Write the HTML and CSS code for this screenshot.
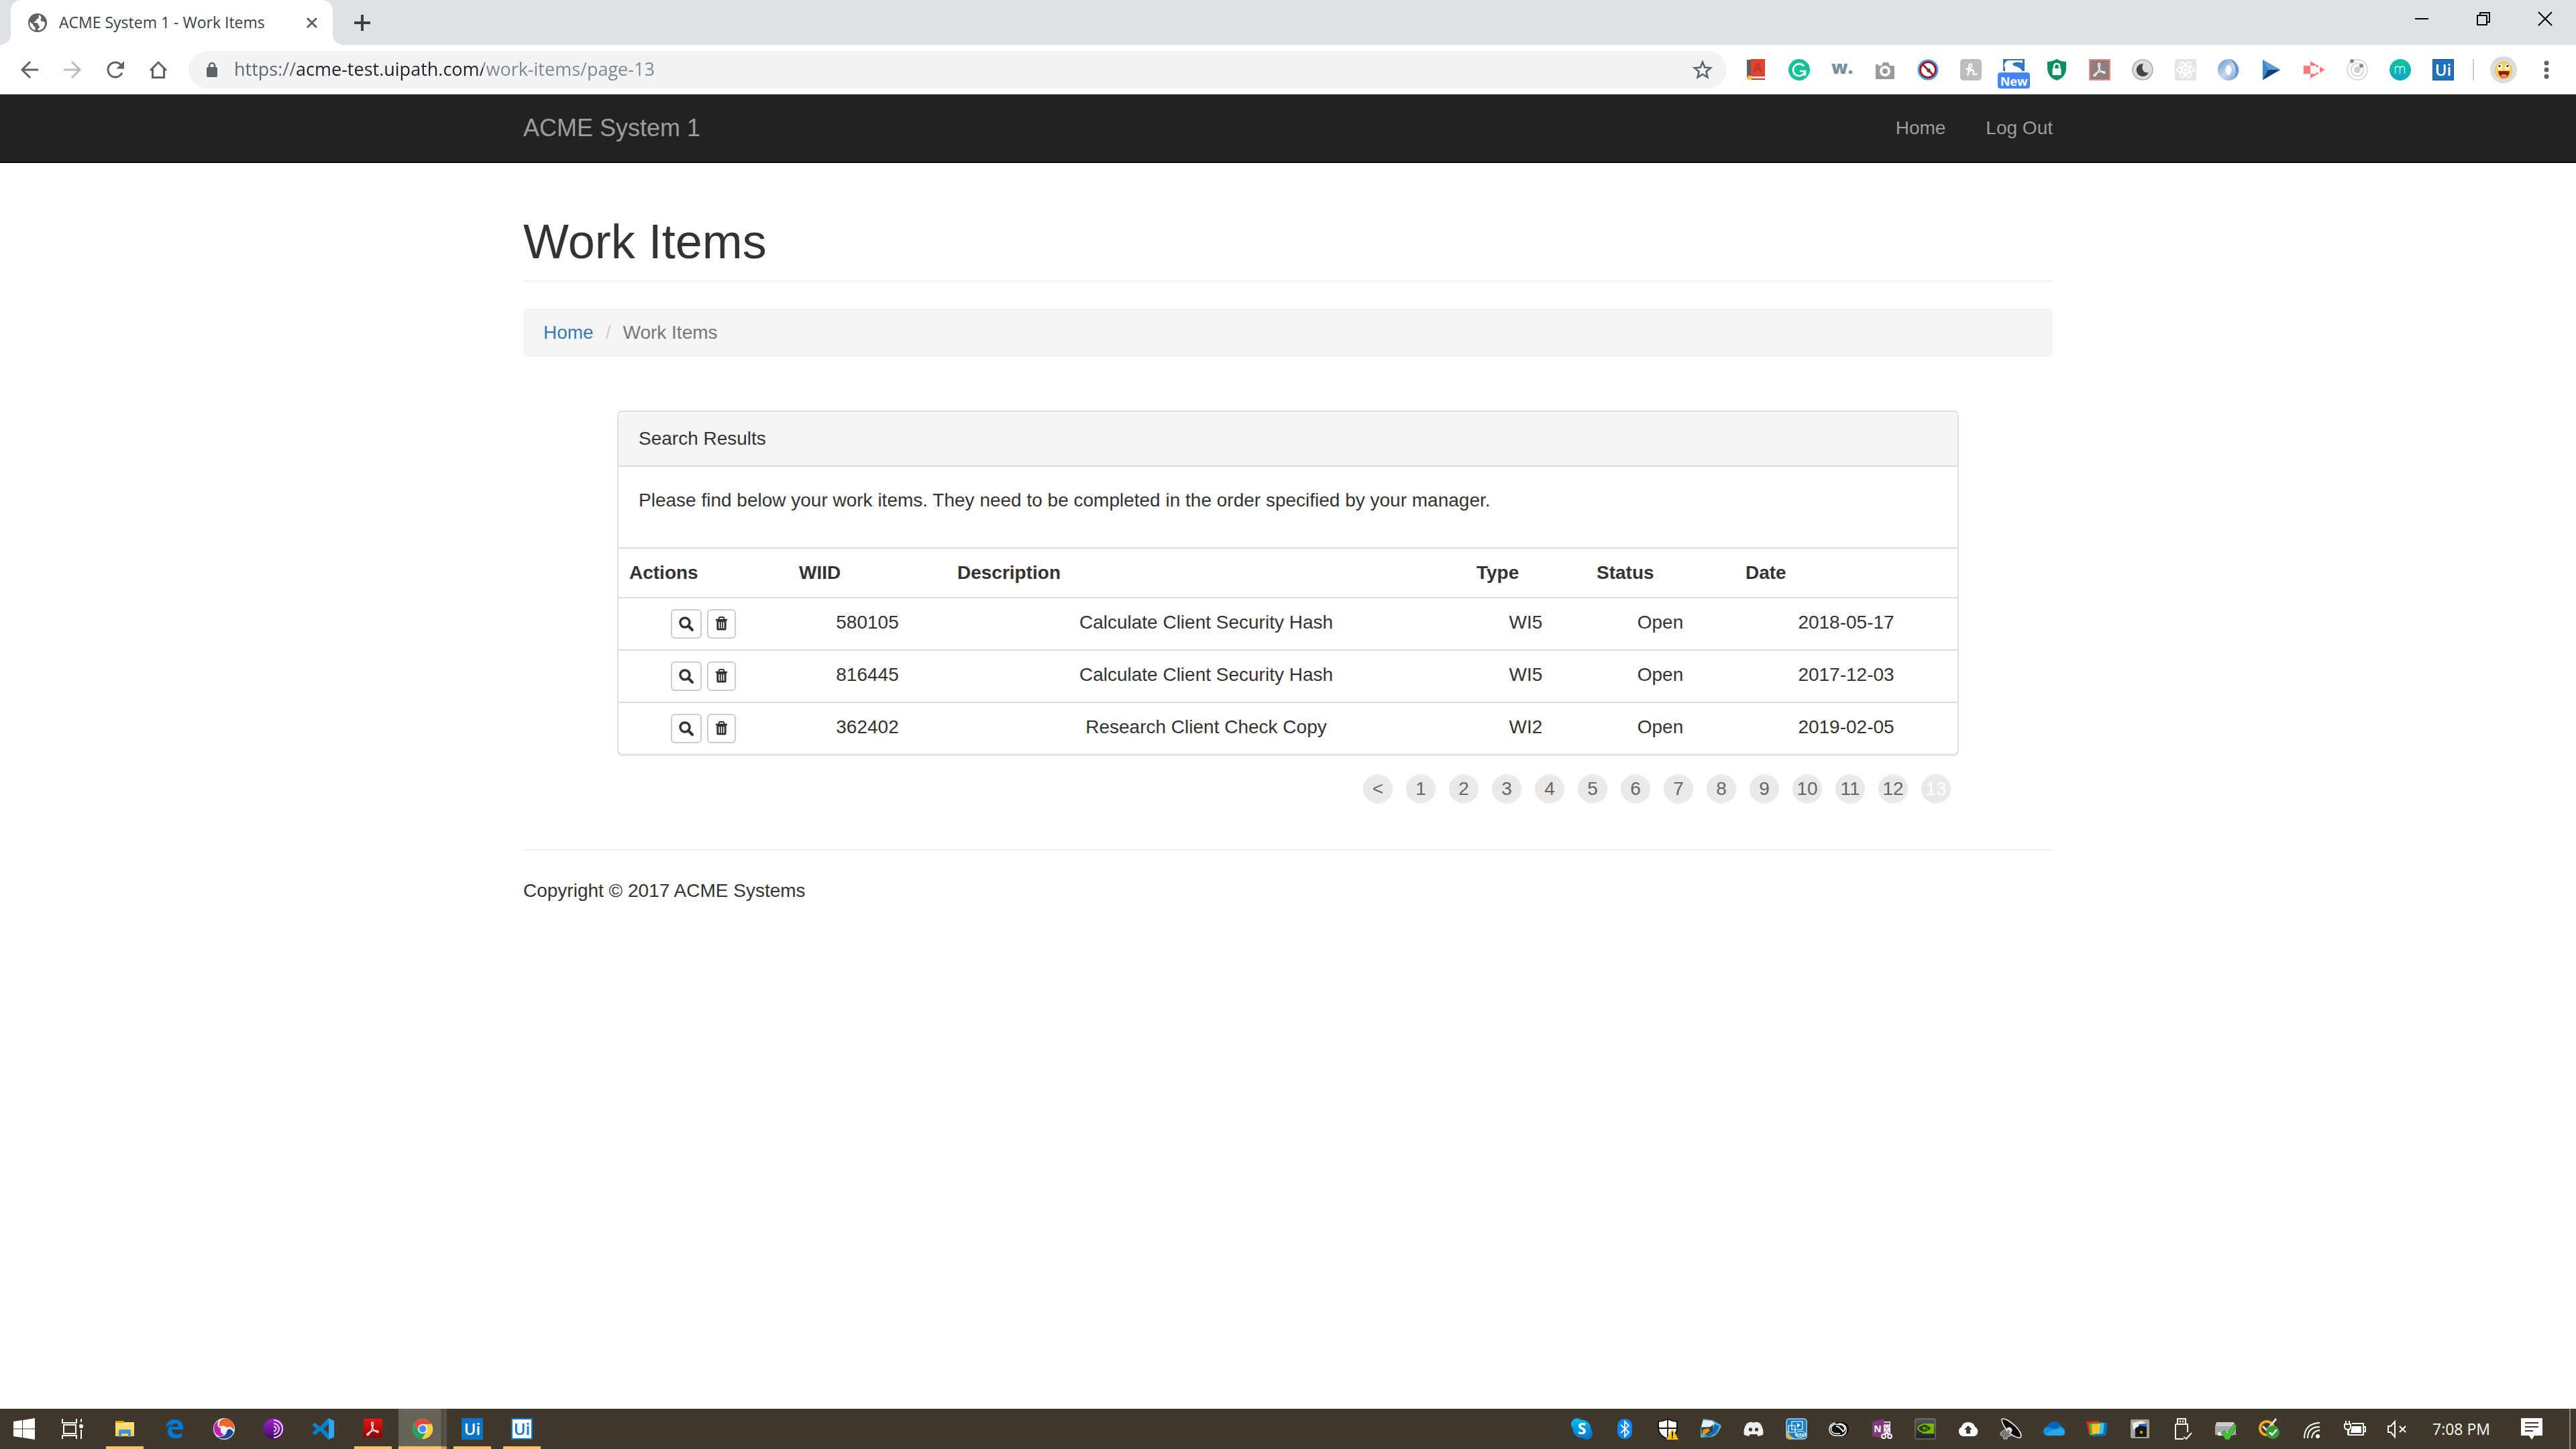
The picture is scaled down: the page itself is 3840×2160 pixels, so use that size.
FILE: index.html
```html
<!DOCTYPE html>
<html lang="en">
<head>
<meta charset="utf-8">
<title>ACME System 1 - Work Items</title>
<link rel="stylesheet" href="styles.css">
</head>
<body>
<svg class="defs" aria-hidden="true">
  <defs>
    <symbol id="search" viewBox="0 0 22 24"><circle cx="9" cy="10" r="7" fill="none" stroke="currentColor" stroke-width="3.4"/><path d="M14 15l6 6" stroke="currentColor" stroke-width="4" stroke-linecap="round"/></symbol>
    <symbol id="trash" viewBox="0 0 20 24"><path d="M6 5V3.500q0-2 2-2h4q2 0 2 2V5" fill="none" stroke="currentColor" stroke-width="2"/><path d="M1 4.500h18v2.500H1zM2.500 7h15v13q0 2-2 2h-11q-2 0-2-2z" fill="currentColor"/><path d="M6.500 9v10M10 9v10M13.500 9v10" stroke="#fff" stroke-width="1.600"/></symbol>
    <linearGradient id="skypeFill" x2="0" y2="1"><stop stop-color="#00b7f0"/><stop offset="1" stop-color="#0078d4"/></linearGradient>
    <linearGradient id="torFill" x2="0" y2="1"><stop stop-color="#a020d8"/><stop offset="1" stop-color="#420c5d"/></linearGradient>
    <linearGradient id="mFill" x2="0" y2="1"><stop stop-color="#13c39c"/><stop offset="1" stop-color="#0aa6c9"/></linearGradient>
    <linearGradient id="ringFill" x2="1" y2="1"><stop stop-color="#5d8fc7"/><stop offset=".5" stop-color="#c5d8ec"/><stop offset="1" stop-color="#6f9cd0"/></linearGradient>
    <linearGradient id="steel" x2="0" y2="1"><stop stop-color="#50555a"/><stop offset="1" stop-color="#1f2428"/></linearGradient>
    <linearGradient id="pdfRed" x2="0" y2="1"><stop stop-color="#f01414"/><stop offset="1" stop-color="#8b0000"/></linearGradient>
    <linearGradient id="folder" x2="0" y2="1"><stop stop-color="#ffe07a"/><stop offset="1" stop-color="#ffcf48"/></linearGradient>
    <symbol id="adobe" viewBox="0 0 32 32"><path d="M15 6c2.500 0 1.500 6-1 11-1.500 3.500-4 8.500-6 8.500-2.500 0 0-4 6-6 4-1.300 10-1.600 10 .8 0 2.200-5-.3-7.500-3.800C14 13 13 6 15 6z" fill="none" stroke="#fff" stroke-width="1.500"/></symbol>
  </defs>
</svg>

<header class="browser">
  <div class="tabstrip">
    <div class="tab">
      <svg class="favicon" viewBox="0 0 28 28"><circle cx="14" cy="14" r="14" fill="#5f6368"/><path d="M16 2.500c-1 3 1 4-2 5.500-3 1-1 3-4 4-2 .5-2 2 0 2 3 0 5 0 5 3 0 2 2 1 2 3 0 2-3 2-3 5 6 1 11-4 11-11 0-1-1-2-3-2-3 0-4-1-3-4 1-2 0-5-3-5.500zM2.500 12c2 3 5 3 5 6 1 2 4 2 3 4v3C5 24 1 18 2.500 12z" fill="#fff"/></svg>
      <span class="tab-title">ACME System 1 - Work Items</span>
      <button class="plain tab-close" aria-label="Close tab"><svg width="18" height="18" viewBox="0 0 18 18"><path d="M2 2l14 14M16 2L2 16" stroke="#5f6368" stroke-width="3"/></svg></button>
    </div>
    <button class="plain new-tab" aria-label="New tab"><svg width="24" height="24" viewBox="0 0 24 24"><path d="M12 0v24M0 12h24" stroke="#3c4043" stroke-width="4"/></svg></button>
    <div class="window-buttons">
      <button class="plain" aria-label="Minimize"><svg width="20" height="20" viewBox="0 0 20 20"><path d="M0 10h20" stroke="#000" stroke-width="2"/></svg></button>
      <button class="plain" aria-label="Restore"><svg width="20" height="20" viewBox="0 0 20 20" fill="none" stroke="#000" stroke-width="2"><path d="M1 5h14v14H1zM5 5V1h14v14h-4"/></svg></button>
      <button class="plain" aria-label="Close"><svg width="20" height="20" viewBox="0 0 20 20"><path d="M0 0l20 20M20 0L0 20" stroke="#000" stroke-width="2"/></svg></button>
    </div>
  </div>

  <div class="toolbar">
    <div class="nav-buttons">
      <button class="plain" aria-label="Back"><svg viewBox="0 0 32 32" fill="none" stroke="#5f6368" stroke-width="3"><path d="M29 16H5M17 4L5 16l12 12"/></svg></button>
      <button class="plain" aria-label="Forward"><svg viewBox="0 0 32 32" fill="none" stroke="#babcbe" stroke-width="3"><path d="M3 16h24M15 4l12 12-12 12"/></svg></button>
      <button class="plain" aria-label="Reload"><svg viewBox="0 0 32 32"><path d="M26 20.500A11 11 0 1 1 24.500 9" fill="none" stroke="#5f6368" stroke-width="3"/><path d="M29 3v11.500H17.500z" fill="#5f6368"/></svg></button>
      <button class="plain" aria-label="Home page"><svg viewBox="0 0 32 32"><path d="M7.500 14v13.500h17V14M4 17L16 5l12 12" fill="none" stroke="#5f6368" stroke-width="3"/></svg></button>
    </div>
    <div class="omnibox">
      <svg class="lock" viewBox="0 0 18 24"><rect x="1" y="8" width="16" height="15" rx="2" fill="#5f6368"/><path d="M5 9V6a4 4 0 0 1 8 0v3" fill="none" stroke="#5f6368" stroke-width="2.500"/></svg>
      <input class="url" type="text" aria-label="Address" value="https://acme-test.uipath.com/work-items/page-13">
      <button class="plain star" aria-label="Bookmark this page"><svg width="32" height="32" viewBox="0 0 32 32"><path d="M16 4.500l3.300 8 8.700.7-6.600 5.600 2 8.400-7.400-4.500-7.400 4.500 2-8.400L4 13.200l8.700-.7z" fill="none" stroke="#5f6368" stroke-width="2.600"/></svg></button>
    </div>
    <div class="extensions">
      <svg viewBox="0 0 32 32"><path d="M2 1h6v27H2z" fill="#616161"/><path d="M8 0h21v26H8z" fill="#e04334"/><text x="18" y="20" class="g" font-size="20" font-weight="700" fill="#b93a30" text-anchor="middle">A</text><path d="M4 27h25v2H6z" fill="#ddd"/><path d="M7 29h22v2H7z" fill="#d63b30"/><path d="M3 25h6v7l-3-2-3 2z" fill="#fbc02d"/></svg>
      <svg viewBox="0 0 32 32"><circle cx="16" cy="16" r="16" fill="#15c39a"/><path d="M23 10.500A9 9 0 1 0 24.500 19M17 18h8v7" fill="none" stroke="#fff" stroke-width="2.600"/></svg>
      <svg viewBox="0 0 32 32"><text x="0" y="22" class="g" font-size="27" font-weight="800" fill="#78909c">w.</text></svg>
      <svg viewBox="0 0 32 32"><path d="M2 11V8h4v2h5l2-5h8l2 5h7v20H2z" fill="#9a9a9a"/><circle cx="16" cy="18" r="8" fill="#fff"/><circle cx="16" cy="18" r="4" fill="#999"/></svg>
      <svg viewBox="0 0 32 32"><circle cx="16" cy="16" r="15.500" fill="#4c9ff0"/><circle cx="16" cy="16" r="11.500" fill="#fff" stroke="#9c2020" stroke-width="3"/><circle cx="17" cy="17" r="3" fill="#48607c"/><path d="M8 8l16 16" stroke="#a32020" stroke-width="3"/></svg>
      <svg viewBox="0 0 32 32"><rect width="32" height="32" rx="5" fill="#bdbdbd"/><path d="M9 14q3 3 7-1 3-4 0-5.500-3-.5-3 5.500 0 7-2 11.500 2-8 6-8.500 4 0 2.500 4-1 5 5 2" fill="none" stroke="#fff" stroke-width="2.300" stroke-linecap="round"/></svg>
      <span class="ext-badged">
        <svg viewBox="0 0 32 32"><path d="M0 0h32v18H0z" fill="#337ab7"/><path d="M9 2h20v4q-8-3-14 0-3 3 4 5 8 2 9 7H3v-5q-3-4 0-7 2-4 6-4z" fill="#fff"/></svg>
        <span class="ext-label">New</span>
      </span>
      <svg viewBox="0 0 32 32"><path d="M16 0q7 4 14 4v9q0 14-14 19Q2 27 2 13V4q7 0 14-4z" fill="#0a8f5f"/><path d="M9.500 14h13v10h-13z" fill="#fff"/><path d="M12 14v-3q0-4 4-4t4 4v3" fill="none" stroke="#fff" stroke-width="2.500"/></svg>
      <svg viewBox="0 0 32 32"><rect x="1" y="1" width="30" height="30" fill="#8c7f7e" stroke="#f4857b" stroke-width="2"/><use href="#adobe"/></svg>
      <svg viewBox="0 0 32 32"><circle cx="16" cy="16" r="15" fill="#dcdcdc" stroke="#aaa" stroke-width="1.500"/><path d="M17 7a9.500 9.500 0 1 0 8 13c-8 2-12-6-8-13z" fill="#444"/></svg>
      <svg viewBox="0 0 32 32"><rect width="32" height="32" rx="2" fill="#e5e5e5"/><g fill="none" stroke="#fff" stroke-width="1.800"><ellipse cx="16" cy="16" rx="13" ry="5"/><ellipse cx="16" cy="16" rx="13" ry="5" transform="rotate(60 16 16)"/><ellipse cx="16" cy="16" rx="13" ry="5" transform="rotate(120 16 16)"/></g><circle cx="16" cy="16" r="2.500" fill="#fff"/></svg>
      <svg viewBox="0 0 32 32"><circle cx="16" cy="16" r="16" fill="url(#ringFill)"/><path d="M18 0c12 4 17 20 5 30C31 20 28 8 18 0z" fill="#5482ba"/><path d="M16 8q9 8 0 17-9-9 0-17z" fill="#fff"/></svg>
      <svg viewBox="0 0 32 32"><path d="M3 1l26 15L3 31z" fill="#2e6fb5"/><path d="M3 1l8 15H29z" fill="#5b9bd8"/><path d="M3 31l8-15h18z" fill="#153f77"/><path d="M3 1l8 15-8 15z" fill="#3c86ca"/></svg>
      <svg viewBox="0 0 32 32"><path d="M0 10h10V3l22 13-22 13v-7H0z" fill="#ff7b7b"/><path d="M10 10h9v3l5-3v12l-5-3v3h-9z" fill="#fff"/></svg>
      <svg viewBox="0 0 32 32"><circle cx="16" cy="16" r="15" fill="none" stroke="#d8d8d8" stroke-width="2"/><circle cx="16" cy="16" r="9.500" fill="none" stroke="#d8d8d8" stroke-width="2"/><circle cx="16" cy="16" r="5" fill="#d0d0d0"/><circle cx="8" cy="3" r="3" fill="#888"/><circle cx="22" cy="10" r="3" fill="#888"/></svg>
      <svg viewBox="0 0 32 32"><circle cx="16" cy="16" r="16" fill="url(#mFill)"/><path d="M8.500 22V11M8.500 14c1-4 7-4 7 0v8M15.500 14c1-4 7-4 7 0v8" fill="none" stroke="#c7f0ec" stroke-width="1.300"/></svg>
      <svg viewBox="0 0 32 32"><rect x=".5" y=".5" width="31" height="31" fill="#1f72b8" stroke="#2b4fa3"/><text x="16" y="25" class="g" font-size="24" fill="#fff" text-anchor="middle" font-weight="600">Ui</text></svg>
    </div>
    <div class="profile">
      <svg class="avatar" viewBox="0 0 40 40"><circle cx="20" cy="20" r="20" fill="#dcdcdc"/><circle cx="20" cy="21" r="12.500" fill="#fcd558" stroke="#e9b53c"/><ellipse cx="14.500" cy="16" rx="3.500" ry="4" fill="#fff"/><ellipse cx="25.500" cy="16" rx="3.500" ry="4" fill="#fff"/><circle cx="14" cy="14.500" r="1.500"/><circle cx="26" cy="14.500" r="1.500"/><path d="M12 22h17q-1 10-8.500 10T12 22z" fill="#8f1b12"/><path d="M15 29q6-5 11 0-5 5-11 0z" fill="#f08a8a"/></svg>
      <button class="plain menu" aria-label="Menu"><svg width="8" height="28" viewBox="0 0 8 28" fill="#5f6368"><circle cx="4" cy="4" r="3.500"/><circle cx="4" cy="14" r="3.500"/><circle cx="4" cy="24" r="3.500"/></svg></button>
    </div>
  </div>
</header>

<div class="page">
  <nav class="navbar">
    <div class="container navbar-inner">
      <a class="brand" href="#">ACME System 1</a>
      <div class="nav-links"><a href="#">Home</a><a href="#">Log Out</a></div>
    </div>
  </nav>

  <main class="container">
    <h1>Work Items</h1>
    <ol class="breadcrumb"><li><a href="#">Home</a></li><li>Work Items</li></ol>

    <div class="results">
      <section class="panel">
        <h2 class="panel-heading">Search Results</h2>
        <p class="panel-body">Please find below your work items. They need to be completed in the order specified by your manager.</p>
        <table class="items">
          <colgroup><col class="c-actions"><col class="c-wiid"><col><col class="c-type"><col class="c-status"><col class="c-date"></colgroup>
          <thead><tr><th>Actions</th><th>WIID</th><th>Description</th><th>Type</th><th>Status</th><th>Date</th></tr></thead>
          <tbody>
            <tr><td><div class="actions"><button class="btn" aria-label="View 580105"><svg class="i-search"><use href="#search"/></svg></button><button class="btn" aria-label="Delete 580105"><svg class="i-trash"><use href="#trash"/></svg></button></div></td><td>580105</td><td>Calculate Client Security Hash</td><td>WI5</td><td>Open</td><td>2018-05-17</td></tr>
            <tr><td><div class="actions"><button class="btn" aria-label="View 816445"><svg class="i-search"><use href="#search"/></svg></button><button class="btn" aria-label="Delete 816445"><svg class="i-trash"><use href="#trash"/></svg></button></div></td><td>816445</td><td>Calculate Client Security Hash</td><td>WI5</td><td>Open</td><td>2017-12-03</td></tr>
            <tr><td><div class="actions"><button class="btn" aria-label="View 362402"><svg class="i-search"><use href="#search"/></svg></button><button class="btn" aria-label="Delete 362402"><svg class="i-trash"><use href="#trash"/></svg></button></div></td><td>362402</td><td>Research Client Check Copy</td><td>WI2</td><td>Open</td><td>2019-02-05</td></tr>
          </tbody>
        </table>
      </section>
      <nav class="pager" aria-label="Pages"><a href="#">&lt;</a><a href="#">1</a><a href="#">2</a><a href="#">3</a><a href="#">4</a><a href="#">5</a><a href="#">6</a><a href="#">7</a><a href="#">8</a><a href="#">9</a><a href="#">10</a><a href="#">11</a><a href="#">12</a><a href="#" class="current" aria-current="page">13</a></nav>
    </div>

    <footer class="footer">Copyright © 2017 ACME Systems</footer>
  </main>
</div>

<div class="taskbar">
  <div class="apps">
    <button class="plain app" aria-label="Start"><svg viewBox="0 0 32 32" fill="#fff"><path d="M0 5l13-2v12.500H0zM14 3l18-3v15.500H14zM0 16.500h13V29L0 27zM14 16.500h18V32l-18-3z"/></svg></button>
    <button class="plain app task-view" aria-label="Task View"><svg viewBox="0 0 32 32" fill="none" stroke="#fff" stroke-width="2"><path d="M1 1v6h21V1M3 10h18v13H3zM1 31v-5h21v5M29 1v5M29 17v14"/><circle cx="29" cy="12" r="2" fill="#fff"/></svg></button>
    <button class="plain app open" aria-label="File Explorer"><svg viewBox="0 0 32 32"><path d="M2 4h12l2 3h-2v3H2z" fill="#e0a000"/><path d="M2 7h12l2-1h14v21H2z" fill="url(#folder)"/><path d="M7 28V19q0-2 2-2h14q2 0 2 2v9h-4v-5H11v5z" fill="#3b96dd"/></svg></button>
    <button class="plain app" aria-label="Edge"><svg viewBox="0 0 32 32"><path d="M3 14C5 4 11 2 17 2c8 0 13 6 12 15H12c0 8 9 9 15 5v6C18 33 5 30 6 19c0-5 3-8 6-9-5 0-7 2-9 4zm9-1h10c0-7-9-7-10 0z" fill="#0078d7"/></svg></button>
    <button class="plain app" aria-label="Media browser"><svg viewBox="0 0 32 32"><circle cx="16" cy="16" r="16" fill="#eee"/><path d="M15 1C25-1 33 8 30.500 18 28 13 24 12 20 14 16 10 12 11 9 13 8 7 10 2 15 1z" fill="#f0662a"/><path d="M8 3.500C5 9 6 14 11 15 10 20 12 23 16 25 8 30 1 24 1 15 1 10 4 6 8 3.500z" fill="#c41fb0"/><path d="M30 21C27 30 15 34 6 27.500 13 28.500 19 26 20 20 21 16 26 14 30 21z" fill="#17489c"/></svg></button>
    <button class="plain app" aria-label="Tor"><svg viewBox="0 0 32 32"><circle cx="16" cy="16" r="15.500" fill="url(#torFill)"/><path d="M16 3a13 13 0 0 1 0 26M16 8a8 8 0 0 1 0 16M16 12.500a3.500 3.500 0 0 1 0 7" fill="none" stroke="#f0d8fa" stroke-width="2"/></svg></button>
    <button class="plain app" aria-label="Code editor"><svg viewBox="0 0 32 32"><path d="M23 0l9 4v24l-9 4L11 19l-7 6-4-2V21l6-5-6-5V9l4-2 7 6zM24 9l-8 7 8 7z" fill="#0a7fcb"/><path d="M23 0l9 4v24l-9 4 1-3V3z" fill="#30a8ee"/></svg></button>
    <button class="plain app open" aria-label="Acrobat"><svg viewBox="0 0 32 32"><rect x="2" y="1" width="28" height="28" fill="url(#pdfRed)"/><use href="#adobe"/></svg></button>
    <button class="plain app open active" aria-label="Chrome"><svg viewBox="0 0 32 32"><circle cx="16" cy="16" r="15" fill="#fccf3f"/><path d="M3 8.500A15 15 0 0 1 29 8.500L16 9.500 9 19z" fill="#dd4b3e"/><path d="M3 8.500A15 15 0 0 0 15 31l7-12H9z" fill="#1da462"/><path d="M29.500 9H17l6 10-8 12a15 15 0 0 0 14.500-22z" fill="#fccf3f"/><circle cx="16" cy="16" r="7" fill="#fff"/><circle cx="16" cy="16" r="5.500" fill="#4c8bf5"/></svg></button>
    <button class="plain app open" aria-label="UiPath Studio"><svg viewBox="0 0 32 32"><rect width="32" height="32" fill="#0b76c5"/><text x="16" y="25" class="g" font-size="24" fill="#fff" text-anchor="middle" font-weight="600">Ui</text></svg></button>
    <button class="plain app open" aria-label="UiPath Robot"><svg viewBox="0 0 32 32"><rect x="1" y="1" width="30" height="30" fill="#fff" stroke="#0b76c5" stroke-width="2"/><text x="16" y="25" class="g" font-size="24" fill="#0b76c5" text-anchor="middle" font-weight="600">Ui</text></svg></button>
  </div>

  <div class="tray">
    <svg viewBox="0 0 32 32"><circle cx="9" cy="9" r="9" fill="#00b4ef"/><circle cx="23" cy="23" r="9" fill="#0078d4"/><circle cx="16" cy="16" r="13.500" fill="url(#skypeFill)"/><text x="16" y="24" class="g" font-size="23" font-weight="700" fill="#fff" text-anchor="middle">S</text></svg>
    <svg viewBox="0 0 32 32"><rect x="5" y="1" width="22" height="30" rx="10" fill="#0a84ff"/><path d="M10 10l12 11-6 6V5l6 6-12 11" fill="none" stroke="#fff" stroke-width="1.800"/></svg>
    <svg viewBox="0 0 32 32"><path d="M16 1q7 4 14 4v9q0 12-14 17Q2 26 2 14V5q7 0 14-4z" fill="#fff" stroke="#111" stroke-width="2"/><path d="M16 2v28M2 15h28" stroke="#111" stroke-width="1.800"/><path d="M23 15l9 17H14z" fill="#ffc20e"/><path d="M23 20v7M23 28v2" stroke="#111" stroke-width="1.800"/></svg>
    <svg viewBox="0 0 32 32"><path d="M5 1l14 2 12 7q2 2-1 6-4 9-12 12L1 29V17z" fill="#4fb8c8"/><path d="M5 3l13 1 4 4-8 6-12-1z" fill="#e6eef6"/><path d="M2 14l14-1 3-3 1 10-9 5H3z" fill="#2c4038"/><path d="M5 17l8-2 2 4-8 6-4 1z" fill="#e0902d"/><path d="M22 9l7 3-5 10-8 5-10 1 12-6z" fill="#1d62b8"/></svg>
    <svg viewBox="0 0 32 32"><path d="M6 8q5-3 8-2l2 1 2-1q4-1 8 2 6 9 4 17l-7 2-2-3h-10l-2 3-7-2Q0 16 6 8z" fill="#eee"/><circle cx="11.500" cy="17" r="2.700" fill="#40382b"/><circle cx="20.500" cy="17" r="2.700" fill="#40382b"/></svg>
    <svg viewBox="0 0 32 32"><rect x="1" y="1" width="30" height="30" rx="4" fill="#147fc9" stroke="#a8d4ec" stroke-width="1.500"/><path d="M2 18q3 9 11 12H5q-3-1-3-4z" fill="#f1b61b"/><path d="M4 11h10v10H4zM9 5h16v12H9z" fill="none" stroke="#fff" stroke-width="1.200"/><path d="M17 7l5 3.500-5 3.500z" fill="#fff"/><ellipse cx="22" cy="24" rx="7.500" ry="4.500" fill="none" stroke="#fff"/><text x="22" y="27" class="g" font-size="7" font-weight="700" fill="#fff" text-anchor="middle">intel</text></svg>
    <svg viewBox="0 0 32 32"><rect x="2" y="6" width="28" height="21" rx="10" fill="#111"/><path d="M17 23H11a7 7 0 1 1 2-13.500A9 9 0 1 1 20 26h-9a9.500 9.500 0 0 1-1-19" fill="none" stroke="#fff" stroke-width="1.600"/><path d="M11 12.500q3-1 6 2.500l5 5M15 10q6-2 9 5 0 5-4 5" fill="none" stroke="#fff" stroke-width="1.800"/></svg>
    <svg viewBox="0 0 32 32"><path d="M1 5l17-4v29L1 27z" fill="#80397b"/><path d="M18 5h10v19H18z" fill="#fff"/><text x="9" y="21" class="g" font-size="14" font-weight="700" fill="#fff" text-anchor="middle">N</text><path d="M18 12l9 13M27 12l-9 13M18 8h9" stroke="#80397b" stroke-width="3"/><path d="M18 12l8 13M27 12l-8 13" stroke="#fff" stroke-width="1.800"/><g fill="#80397b" stroke="#fff" stroke-width="2"><circle cx="18" cy="27" r="3"/><circle cx="27" cy="27" r="3"/></g></svg>
    <svg viewBox="0 0 32 32"><rect x="1" y="1" width="30" height="30" rx="2" fill="url(#steel)" stroke="#8b8b86"/><path d="M12 8h17v15H12z" fill="#76b900"/><path d="M5 15q8-9 18 0-9 9-18 0zm4 0q5-5 10 0-5 5-10 0zM12 11q8-1 11 6" fill="none" stroke="#26300f" stroke-width="1.600"/><path d="M12 21Q5 18 5 15q2-5 8-5" fill="none" stroke="#76b900" stroke-width="2"/></svg>
    <svg viewBox="0 0 32 32"><path d="M8 27a7.500 7.500 0 0 1-2-14q2-7 10-7t10 7a7.500 7.500 0 0 1-1 14z" fill="#fff"/><path d="M16 11l6 6h-3v6h-6v-6h-3z" fill="#40382b"/></svg>
    <svg viewBox="0 0 32 32"><path d="M0 22l9-7 9 8-2 3-6 2v3H5l-1-4-4-2z" fill="#777" stroke="#ccc"/><path d="M2 2q3-3 13 4 14 10 16 20 0 4-5 3-9-2-17-12Q2 8 2 2z" fill="#0b0b0b" stroke="#f0f0f0" stroke-width="1.600"/><circle cx="13" cy="18" r="4.500" fill="#e4e4e4"/><circle cx="12" cy="20" r="2.500" fill="#888"/></svg>
    <svg viewBox="0 0 32 32"><path d="M6 26Q0 25 0 20q0-6 6-7Q9 5 17 5q7 0 10 8 5 2 5 7 0 6-6 6z" fill="#1490df"/><path d="M6 13Q9 5 17 5q6 0 9 7-4 1-6 5z" fill="#0364b8"/><path d="M2 24l19-9q11 0 11 6 0 5-6 5H6z" fill="#28a8ea"/></svg>
    <svg viewBox="0 0 32 32"><path d="M0 5l19-1-1 18-14 3z" fill="#e52620"/><path d="M4 8l20-2-2 19-16 1z" fill="#43b92f"/><path d="M12 8l20-1-3 19-19 2z" fill="#1269bd"/><path d="M20 8l7-1-2 16-7 1z" fill="#35c5f0"/><path d="M8 9l13-1-2 15-10 1z" fill="#ffc523"/></svg>
    <svg viewBox="0 0 32 32"><rect x="2" y="2" width="28" height="28" rx="2" fill="#a7a39c"/><path d="M5 7l14-3 5 3v5L6 17z" fill="#e8eef7"/><path d="M14 9l12-1v5H15z" fill="#2b65c8"/><path d="M9 15l7-4 10 2v15H9z" fill="#17181b"/><path d="M16 19h4v4h-4z" fill="#c99b18"/></svg>
    <svg viewBox="0 0 32 32" fill="none" stroke="#fff" stroke-width="2"><path d="M8 1h12v8H8zM5 9h18v12M5 9v22h12M17 28l4 3 8-9"/><path d="M11 5h2M15 5h2" stroke-width="3"/></svg>
    <svg viewBox="0 0 32 32"><path d="M2 6h26l3 7H0z" fill="#ccc"/><path d="M0 12h31v13H0z" fill="#a6a6ac"/><path d="M4 21h22v5H4z" fill="#eee"/><path d="M9 22l5-3 4 5 10-15 4 2-11 21h-5z" fill="#46c23c" stroke="#218f1d"/></svg>
    <svg viewBox="0 0 32 32"><circle cx="13" cy="15" r="10" fill="#40382b" stroke="#f5a623" stroke-width="4"/><path d="M7 12l6 6L27 1" fill="none" stroke="#e9dfca" stroke-width="3"/><circle cx="22" cy="21" r="10" fill="#329b39"/><path d="M17 21l4 4 7-8" fill="none" stroke="#fff" stroke-width="2.500"/></svg>
    <svg viewBox="0 0 32 32" fill="none" stroke="#fff" stroke-width="1.800"><path d="M5 30Q5 8 28 7M10 30Q10 13 28 13M16 30Q17 19 28 18"/><circle cx="25" cy="27" r="3" fill="#fff" stroke="none"/></svg>
    <svg viewBox="0 0 32 32" fill="none" stroke="#fff" stroke-width="2"><path d="M12 8h17v17H7V17M29 13h3v7h-3M3 4v5M8 4v5M1 9h9v4q0 4-4 4-5 0-5-4zM6 17v8"/><path d="M12 12h14v10H10z" fill="#fff" stroke="none"/></svg>
    <svg viewBox="0 0 32 32" fill="none" stroke="#fff" stroke-width="2"><path d="M2 12h4l6-7v23l-6-7H2zM19 12l9 9M28 12l-9 9"/></svg>
    <time class="clock">7:08 PM</time>
    <button class="plain notices" aria-label="Notifications"><svg viewBox="0 0 32 32"><path d="M0 0h32v26H20l-4 6-4-6H0z" fill="#fff"/><path d="M6 7h20M6 13h20M6 19h12" stroke="#40382b" stroke-width="2"/></svg></button>
    <button class="plain show-desktop" aria-label="Show desktop"></button>
  </div>
</div>
</body>
</html>
```
FILE: styles.css
```css
* { box-sizing: border-box; }

body {
  margin: 0;
  min-height: 100vh;
  display: flex;
  flex-direction: column;
  background: #fff;
  color: #333;
  font: 28px/40px "Liberation Sans", Arial, sans-serif;
}

a { color: #337ab7; text-decoration: none; }
svg { display: block; flex: none; overflow: visible; }
.defs { position: absolute; width: 0; height: 0; }
.g { font-family: "Open Sans", "Noto Sans", sans-serif; }

.plain {
  display: flex;
  align-items: center;
  justify-content: center;
  padding: 0;
  border: 0;
  background: none;
}

/* Browser chrome */
.browser {
  border-bottom: 1px solid #a9acaf;
  font-family: "Open Sans", "Noto Sans", sans-serif;
}
.tabstrip {
  display: flex;
  height: 67px;
  padding-left: 16px;
  background: #dee1e6;
}
.tab {
  position: relative;
  display: flex;
  align-items: center;
  width: 480px;
  padding: 0 22px 0 26px;
  border-radius: 16px 16px 0 0;
  background: #fff;
}
.tab::before,
.tab::after {
  content: "";
  position: absolute;
  bottom: 0;
  width: 16px;
  height: 16px;
}
.tab::before { right: 100%; background: radial-gradient(circle at 0 0, #dee1e6 16px, #fff 16px); }
.tab::after { left: 100%; background: radial-gradient(circle at 100% 0, #dee1e6 16px, #fff 16px); }
.favicon { width: 28px; height: 28px; }
.tab-title {
  flex: 1;
  margin-left: 18px;
  padding-bottom: 2px;
  color: #3c4043;
  font-size: 23px;
  line-height: 32px;
  white-space: nowrap;
}
.new-tab { width: 88px; }
.window-buttons {
  display: flex;
  height: 56px;
  margin-left: auto;
}
.window-buttons button { width: 92px; }

.toolbar {
  display: flex;
  align-items: center;
  height: 73px;
  padding: 0 32px 0 28px;
}
.nav-buttons { display: flex; gap: 32px; }
.nav-buttons svg { width: 32px; height: 32px; }
.omnibox {
  flex: 1;
  display: flex;
  align-items: center;
  height: 56px;
  margin-left: 29px;
  padding: 0 20px 0 26px;
  border-radius: 28px;
  background: #f1f3f4;
}
.lock { width: 18px; height: 24px; }
.url {
  flex: 1;
  height: 42px;
  margin-left: 24px;
  padding: 0 0 2px;
  border: 0;
  outline: 0;
  font: 27px/40px "Open Sans", "Noto Sans", sans-serif;
  color: #202124;
  -webkit-text-fill-color: transparent;
  background: linear-gradient(90deg, #5f6368 93px, #202124 93px, #202124 371px, #80868b 371px);
  -webkit-background-clip: text;
  background-clip: text;
}
.extensions {
  display: flex;
  gap: 32px;
  margin-left: 28px;
}
.extensions svg { width: 32px; height: 32px; }
.ext-badged { position: relative; }
.ext-label {
  position: absolute;
  top: 20px;
  left: -8px;
  width: 48px;
  height: 24px;
  border-radius: 4px;
  background: #4285f4;
  color: #fff;
  font-size: 18px;
  font-weight: 700;
  line-height: 26px;
  text-align: center;
}
.profile {
  display: flex;
  align-items: center;
  height: 32px;
  margin-left: 28px;
  padding-left: 24px;
  border-left: 2px solid #ccc;
}
.avatar { width: 40px; height: 40px; }
.menu { width: 24px; margin-left: 32px; }

/* Page */
.page { flex: 1; }
.container {
  max-width: 2340px;
  margin: 0 auto;
  padding: 0 30px;
}
.navbar { border-bottom: 2px solid #080808; background: #222; }
.navbar-inner {
  display: flex;
  align-items: center;
  justify-content: space-between;
  height: 100px;
}
.navbar a { color: #9d9d9d; }
.brand { font-size: 36px; }
.nav-links { display: flex; gap: 60px; }

h1 {
  margin: 78px 0 40px;
  padding-bottom: 18px;
  border-bottom: 2px solid #eee;
  font-size: 72px;
  font-weight: 400;
  line-height: 79px;
}
.breadcrumb {
  display: flex;
  margin: 0;
  padding: 16px 30px;
  border-radius: 8px;
  background: #f5f5f5;
  list-style: none;
  color: #777;
}
.breadcrumb li + li::before { content: "/"; padding: 0 18px; color: #ccc; }

.results { padding: 80px 140px 0; }
.panel {
  border: 2px solid #ddd;
  border-radius: 8px;
  overflow: hidden;
  box-shadow: 0 2px 2px rgba(0, 0, 0, .05);
}
.panel-heading {
  margin: 0;
  padding: 20px 30px;
  border-bottom: 2px solid #ddd;
  background: #f5f5f5;
  font-size: 28px;
  font-weight: 400;
}
.panel-body { margin: 0; padding: 30px 30px 50px; }
.items { width: 100%; table-layout: fixed; border-collapse: separate; border-spacing: 0; }
.items th,
.items td { padding: 16px; border-top: 2px solid #ddd; vertical-align: top; }
.items th { text-align: left; }
.items td { text-align: center; }
.c-actions { width: 253px; }
.c-wiid { width: 236px; }
.c-type { width: 179px; }
.c-status { width: 222px; }
.c-date { width: 332px; }
.actions { display: flex; justify-content: center; gap: 8px; }
.btn {
  display: flex;
  align-items: center;
  height: 44px;
  padding: 0 10px;
  border: 2px solid #ccc;
  border-radius: 6px;
  background: #fff;
  color: #333;
}
.i-search { width: 22px; height: 24px; }
.i-trash { width: 19px; height: 24px; }

.pager {
  display: flex;
  justify-content: flex-end;
  gap: 20px;
  padding: 28px 12px 0 0;
}
.pager a {
  width: 44px;
  height: 44px;
  border-radius: 50%;
  background: #e9e9e9;
  color: #666;
  line-height: 43px;
  text-align: center;
}
.pager .current { color: #fff; }

.footer {
  margin-top: 68px;
  padding: 40px 0;
  border-top: 2px solid #eee;
}

/* Taskbar */
.taskbar {
  display: flex;
  justify-content: space-between;
  height: 60px;
  background: #40382b;
  color: #fff;
}
.apps { display: flex; gap: 2px; }
.app {
  width: 72px;
  background: linear-gradient(#ffbd74, #ffbd74) center bottom / 0 4px no-repeat;
}
.app svg { width: 32px; height: 32px; }
.task-view { margin: 0 4px 0 -2px; }
.app.open { background-size: 56px 4px; }
.app.active {
  background:
    linear-gradient(90deg, #ffbd74 64px, #d09c62 64px) center bottom / 72px 4px no-repeat,
    linear-gradient(90deg, #676357 64px, #4c473d 64px, #4c473d 66px, #57534a 66px);
}
.tray { display: flex; align-items: center; gap: 32px; }
.tray svg { width: 32px; height: 32px; }
.clock {
  margin: 0 14px 0 4px;
  font: 23px/32px "Open Sans", "Noto Sans", sans-serif;
  white-space: nowrap;
}
.notices { height: 60px; }
.show-desktop {
  width: 10px;
  height: 60px;
  margin-left: 8px;
  border-left: 2px solid #8a857c;
}
```
